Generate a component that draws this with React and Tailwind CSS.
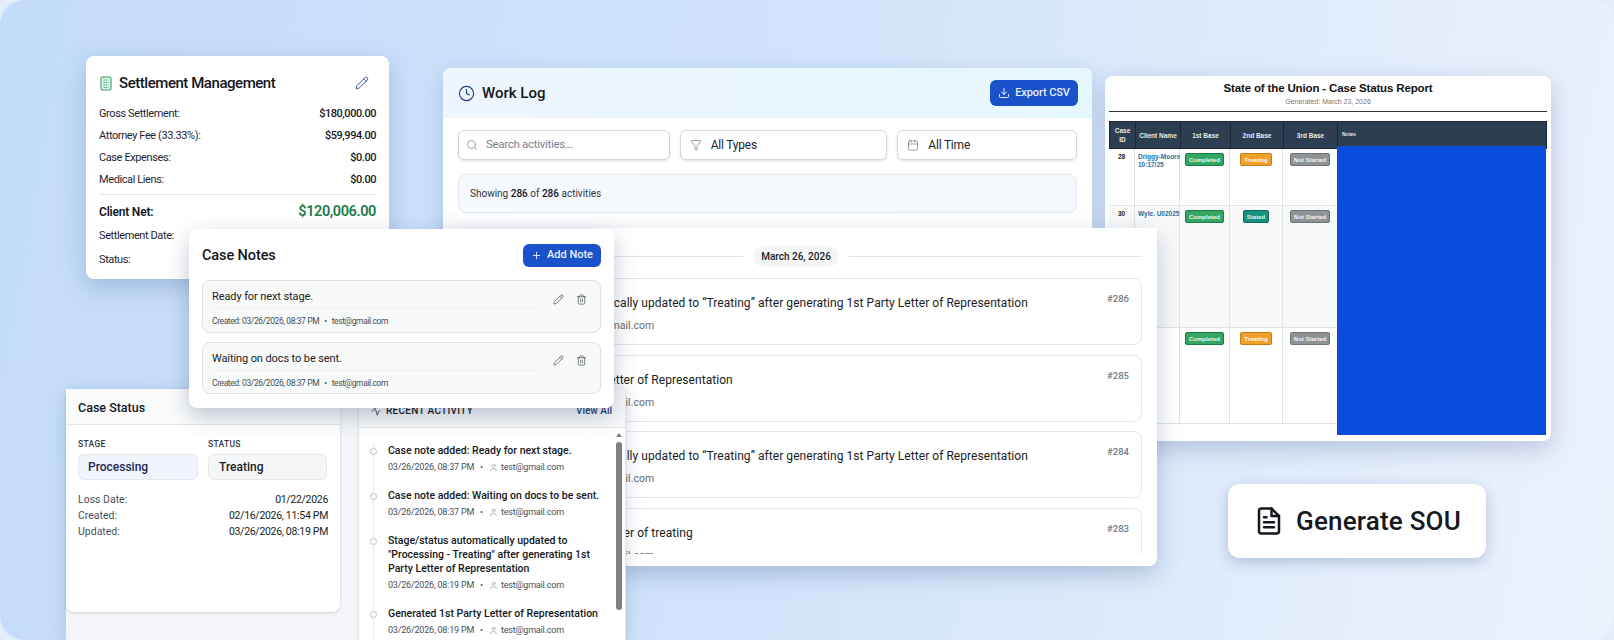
import React from "react";
import { Pencil, Trash2, Plus, Clock, Download, Search, Filter, Calendar, Activity, User } from "lucide-react";

function SettlementRow({ label, value }) {
  return (
    <div className="flex h-[22px] items-center justify-between text-[11px] leading-4 tracking-[-0.4px] text-[#1f2530]">
      <span>{label}</span>
      <span className="font-medium tracking-[-0.45px] text-[#15181e]">{value}</span>
    </div>
  );
}

function SettlementCard() {
  return (
    <div className="absolute left-[86px] top-[56px] h-[223px] w-[303px] rounded-lg bg-white px-[13px] pt-[16px] shadow-[0_8px_24px_rgba(60,90,140,0.28)]">
      <div className="flex h-[22px] items-center justify-between pr-[7px]">
        <div className="flex items-center gap-[6px]">
          <svg width="14" height="15" viewBox="0 0 14 15" fill="none" stroke="#2f9e63" strokeWidth="1.1">
            <rect x="2" y="1" width="10" height="13" rx="1.4" fill="#e6f5ec" />
            <path d="M4.5 4h5M4.5 6.5h5M4.5 9h5M4.5 11.5h5" strokeDasharray="1.4 0.9" />
          </svg>
          <h2 className="text-[15px] font-medium tracking-[-0.45px] text-[#14171c]">Settlement Management</h2>
        </div>
        <Pencil size={14} strokeWidth={1.6} className="text-[#2f4f88]" />
      </div>
      <div className="mt-[9px]">
        <SettlementRow label="Gross Settlement:" value="$180,000.00" />
        <SettlementRow label="Attorney Fee (33.33%):" value="$59,994.00" />
        <SettlementRow label="Case Expenses:" value="$0.00" />
        <SettlementRow label="Medical Liens:" value="$0.00" />
      </div>
      <div className="mt-[3px] border-t border-[#e3e5e8]" />
      <div className="mt-[5px] flex h-[24px] items-center justify-between">
        <span className="text-[12px] font-semibold tracking-[-0.2px] text-[#14171c]">Client Net:</span>
        <span className="text-[14.5px] font-semibold tracking-[-0.4px] text-[#217a4b]">$120,006.00</span>
      </div>
      <div className="mt-[1px] flex h-[22px] items-center text-[11px] tracking-[-0.4px] text-[#1f2530]">Settlement Date:</div>
      <div className="mt-[2px] flex h-[22px] items-center text-[11px] tracking-[-0.4px] text-[#1f2530]">Status:</div>
    </div>
  );
}

function WorkLogHeader() {
  return (
    <div className="absolute left-[443px] top-[68px] h-[180px] w-[649px] overflow-hidden rounded-t-lg bg-white shadow-[0_6px_20px_rgba(60,90,140,0.22)]">
      <div className="flex h-[50px] items-center justify-between bg-gradient-to-r from-[#eef5fd] to-[#e6f7fd] pl-[15px] pr-[14px]">
        <div className="flex items-center gap-[7px]">
          <Clock size={17} strokeWidth={1.6} className="text-[#1f3f78]" />
          <h2 className="text-[15px] font-medium text-[#14171c]">Work Log</h2>
        </div>
        <button className="flex h-[26px] w-[88px] items-center justify-center gap-[5px] rounded-md bg-[#1a52cb] text-[11px] font-medium tracking-[-0.1px] text-[#e8eefc]">
          <Download size={12} />
          Export CSV
        </button>
      </div>
      <div className="flex gap-[10px] px-[15px] pt-[12px]">
        <div className="flex h-[30px] w-[212px] items-center gap-[8px] rounded-md border border-[#d5d8dd] pl-[7px] text-[11.5px] tracking-[-0.3px] text-[#7c828b] shadow-sm">
          <Search size={12} strokeWidth={1.5} />
          Search activities...
        </div>
        <div className="flex h-[30px] w-[208px] items-center gap-[9px] rounded-md border border-[#d5d8dd] pl-[9px] text-[12px] tracking-[-0.2px] text-[#22262c] shadow-sm">
          <Filter size={12} strokeWidth={1.3} className="text-[#6b7078]" />
          All Types
        </div>
        <div className="flex h-[30px] w-[180px] items-center gap-[9px] rounded-md border border-[#d5d8dd] pl-[9px] text-[12px] tracking-[-0.2px] text-[#22262c] shadow-sm">
          <Calendar size={12} strokeWidth={1.3} className="text-[#6b7078]" />
          All Time
        </div>
      </div>
      <div className="mx-[15px] mt-[14px] flex h-[39px] items-center rounded-lg border border-[#e2e8f2] bg-gradient-to-r from-[#f6f9fd] to-[#f4f7fc] pl-[11px] text-[10px] text-[#30353c]">
        <span>Showing <span className="font-medium text-[#14171c]">286</span> of <span className="font-medium text-[#14171c]">286</span> activities</span>
      </div>
    </div>
  );
}

function LogRow({ text, id, h }) {
  return (
    <div className={`flex justify-between overflow-hidden rounded-lg border border-[#e3e6ea] bg-white pl-[34px] pr-[12px] pt-[12px] ${h}`}>
      <div className="pt-[2px]">
        <div className="whitespace-nowrap text-[12px] leading-5 tracking-[0.05px] text-[#1a1d22]">{text}</div>
        <div className="mt-[5px] flex items-center gap-[5px] whitespace-nowrap text-[10.5px] leading-4 text-[#666c75]">
          <span>03/26/2026</span><span>•</span>
          <User size={10} strokeWidth={1.4} />
          <span>test@gmail.com</span>
        </div>
      </div>
      <div className="text-[9.5px] font-medium leading-4 text-[#737982]">{id}</div>
    </div>
  );
}

function WorkLogBody() {
  return (
    <div className="absolute left-[443px] top-[228px] h-[338px] w-[714px] overflow-hidden rounded-b-lg bg-white px-[15px] shadow-[0_8px_24px_rgba(60,90,140,0.3)]">
      <div className="flex h-[50px] items-center pt-[7px]">
        <div className="h-px flex-1 bg-[#e2e4e8]" />
        <span className="mx-[10px] flex h-[21px] w-[86px] items-center justify-center rounded-full bg-[#f5f6f7] text-[10px] font-medium text-[#1a1d22]">March 26, 2026</span>
        <div className="h-px w-[293px] bg-[#e2e4e8]" />
      </div>
      <div className="flex flex-col gap-[9.5px]">
        <LogRow h="h-[67px]" id="#286" text="Stage/status automatically updated to “Treating” after generating 1st Party Letter of Representation" />
        <LogRow h="h-[67px]" id="#285" text="Generated 1st Party Letter of Representation" />
        <LogRow h="h-[67px]" id="#284" text="Stage/status automatically updated to “Treating” after generating 1st Party Letter of Representation" />
        <LogRow h="h-[46px] rounded-b-none border-b-0" id="#283" text="Generated 1st Party Letter of treating" />
      </div>
    </div>
  );
}

function NoteCard({ text, date }) {
  return (
    <div className="flex h-[52.5px] rounded-lg border border-[#dde0e4] bg-[#f8f9f9] pl-[9px] pr-[13px]">
      <div className="w-[328px] pt-[7px]">
        <div className="border-b border-[#eceef0] pb-[2px] text-[11px] leading-[18px] tracking-[-0.1px] text-[#1a1d22]">{text}</div>
        <div className="mt-[6px] flex items-center gap-[5px] whitespace-nowrap text-[8.5px] leading-3 tracking-[-0.4px] text-[#4a4f57]">
          <span>{date}</span><span>•</span><span>test@gmail.com</span>
        </div>
      </div>
      <div className="ml-auto flex items-center gap-[12px] pb-[14px]">
        <Pencil size={11} strokeWidth={1.5} className="text-[#444a52]" />
        <Trash2 size={11} strokeWidth={1.5} className="text-[#444a52]" />
      </div>
    </div>
  );
}

function CaseNotes() {
  return (
    <div className="absolute left-[189px] top-[229px] z-30 h-[179px] w-[425px] rounded-lg bg-white px-[13px] shadow-[0_8px_22px_rgba(50,70,110,0.3)]">
      <div className="flex h-[51px] items-center justify-between pt-[2px]">
        <h2 className="text-[14.5px] font-medium tracking-[-0.1px] text-[#14171c]">Case Notes</h2>
        <button className="flex h-[23px] w-[78px] items-center justify-center gap-[5px] rounded-md bg-[#1a52cb] text-[11px] font-medium text-[#e8eefc]">
          <Plus size={11} />
          Add Note
        </button>
      </div>
      <div className="flex flex-col gap-[9px]">
        <NoteCard text="Ready for next stage." date="Created: 03/26/2026, 08:37 PM" />
        <NoteCard text="Waiting on docs to be sent." date="Created: 03/26/2026, 08:37 PM" />
      </div>
    </div>
  );
}

function CaseStatus() {
  return (
    <div className="h-[223px] w-[274px] rounded-lg bg-white shadow-[0_1px_3px_rgba(0,0,0,0.16)]">
      <div className="flex h-[36px] items-center border-b border-[#e6e8ea] bg-[#fafbfb] pl-[12px] pt-[4px] text-[12.5px] font-medium text-[#14171c]">Case Status</div>
      <div className="flex gap-[10px] px-[12px] pt-[13px]">
        <div className="w-[120px]">
          <div className="text-[8.5px] font-medium leading-3 tracking-[0.3px] text-[#343941]">STAGE</div>
          <div className="mt-[4px] flex h-[26px] items-center rounded-md border border-[#e3e8f0] bg-[#f0f5fc] pl-[9px] text-[12px] font-medium text-[#1d2a56]">Processing</div>
        </div>
        <div className="w-[119px]">
          <div className="text-[8.5px] font-medium leading-3 tracking-[0.3px] text-[#343941]">STATUS</div>
          <div className="mt-[4px] flex h-[26px] items-center rounded-md border border-[#e6e7e9] bg-[#f5f6f7] pl-[10px] text-[12px] font-medium text-[#1a1d22]">Treating</div>
        </div>
      </div>
      <div className="mt-[12px] px-[12px] text-[10.5px] leading-4">
        <div className="flex justify-between"><span className="text-[#4a4f57]">Loss Date:</span><span className="tracking-[-0.3px] text-[#1a1d22]">01/22/2026</span></div>
        <div className="flex justify-between"><span className="text-[#4a4f57]">Created:</span><span className="tracking-[-0.3px] text-[#1a1d22]">02/16/2026, 11:54 PM</span></div>
        <div className="flex justify-between"><span className="text-[#4a4f57]">Updated:</span><span className="tracking-[-0.3px] text-[#1a1d22]">03/26/2026, 08:19 PM</span></div>
      </div>
    </div>
  );
}

function ActivityItem({ title, date, mt }) {
  return (
    <div className={`relative pl-[29px] ${mt}`}>
      <span className="absolute left-[11px] top-[4px] h-[7px] w-[7px] rounded-full border border-[#b8bcc2] bg-white" />
      <div className="text-[10.5px] font-medium leading-[14px] text-[#14171c]">{title}</div>
      <div className="mt-[3px] flex items-center gap-[6px] whitespace-nowrap text-[9px] leading-[13px] tracking-[-0.2px] text-[#4a4f57]">
        <span>{date}</span><span>•</span>
        <User size={9} strokeWidth={1.4} className="text-[#7a7f87]" />
        <span className="-ml-[3px]">test@gmail.com</span>
      </div>
    </div>
  );
}

function RecentActivity() {
  return (
    <div className="relative h-[251px] w-[266px] overflow-hidden bg-white shadow-[0_1px_3px_rgba(0,0,0,0.16)]">
      <div className="flex h-[39px] items-end justify-between border-b border-[#e6e8ea] bg-[#f8f9fa] pb-[10px] pl-[12px] pr-[13px]">
        <span className="flex items-center gap-[5px] text-[10px] font-medium leading-3 tracking-[0.3px] text-[#14171c]">
          <Activity size={10} strokeWidth={1.6} />
          RECENT ACTIVITY
        </span>
        <span className="text-[10px] font-medium leading-3 text-[#1f3f78]">View All</span>
      </div>
      <div className="absolute left-[14px] top-[55px] h-[200px] w-px bg-[#e8eaed]" />
      <div className="pt-[16px]">
        <ActivityItem title="Case note added: Ready for next stage." date="03/26/2026, 08:37 PM" />
        <ActivityItem mt="mt-[15px]" title="Case note added: Waiting on docs to be sent." date="03/26/2026, 08:37 PM" />
        <ActivityItem mt="mt-[15px]" title={<>Stage/status automatically updated to<br />"Processing - Treating" after generating 1st<br />Party Letter of Representation</>} date="03/26/2026, 08:19 PM" />
        <ActivityItem mt="mt-[15px]" title="Generated 1st Party Letter of Representation" date="03/26/2026, 08:19 PM" />
      </div>
      <div className="absolute right-[3px] top-[53px] h-[168px] w-[6px] rounded-full bg-[#7d8085]" />
      <div className="absolute right-[3px] top-[44px] h-0 w-0 border-x-[3px] border-b-[4px] border-x-transparent border-b-[#7d8085]" />
    </div>
  );
}

function CaseOverview() {
  return (
    <div className="absolute left-[66px] top-[389px] z-20 flex h-[251px] w-[560px] items-start gap-[19px] rounded-t-lg bg-[#f3f5f8] shadow-[0_4px_18px_rgba(60,90,140,0.22)]">
      <CaseStatus />
      <RecentActivity />
    </div>
  );
}

function Badge({ color, children }) {
  return (
    <span className={`flex h-[13px] items-center justify-center rounded-[2px] border px-[3px] text-[6px] font-bold leading-none text-white/90 ${color}`}>{children}</span>
  );
}

const BADGE_GREEN = "border-[#1c7a44] bg-[#33a663]";
const BADGE_ORANGE = "border-[#c77e16] bg-[#f0a12b]";
const BADGE_GRAY = "border-[#6f7375] bg-[#8f9395]";
const BADGE_TEAL = "border-[#0f6b5c] bg-[#16917d]";

function ReportRow({ id, name, a, b, c, h, alt }) {
  const cell = "flex justify-center items-start border-r border-[#dfe1e3] pt-[4px]";
  return (
    <div className={`grid grid-cols-[26px_45px_50px_53px_54px] border-b border-[#e2e4e6] ${h} ${alt ? "bg-[#f8f9f9]" : "bg-white"}`}>
      <div className="border-r border-[#dfe1e3] pt-[4px] text-center text-[6.5px] font-bold leading-[8px] text-[#222]">{id}</div>
      <div className="whitespace-nowrap border-r border-[#dfe1e3] pl-[3px] pt-[4px] text-[6.5px] font-bold leading-[8px] text-[#2c6f9c]">{name}</div>
      <div className={cell}>{a}</div>
      <div className={cell}>{b}</div>
      <div className="flex items-start justify-center pt-[4px]">{c}</div>
    </div>
  );
}

function ReportHead() {
  const cls = "flex items-center justify-center border-r border-[#1c2733] text-center text-[6.5px] font-bold leading-[9px] text-[#e6ecf0]";
  return (
    <div className="grid h-[28px] grid-cols-[26px_45px_50px_53px_54px_1fr] border border-[#1c2733] bg-[#2c3e50]">
      <div className={cls}>Case<br />ID</div>
      <div className={cls}>Client Name</div>
      <div className={cls}>1st Base</div>
      <div className={cls}>2nd Base</div>
      <div className={cls}>3rd Base</div>
      <div className="flex items-center pl-[4px] text-[5px] font-bold text-[#e6ecf0]">Notes</div>
    </div>
  );
}

function Report() {
  return (
    <div className="absolute left-[1105px] top-[76px] z-0 h-[365px] w-[446px] rounded-lg bg-white px-[4px] shadow-[0_8px_24px_rgba(60,90,140,0.28)]" style={{ fontFamily: '"Liberation Sans", Arial, sans-serif' }}>
      <h1 className="pt-[4px] text-center text-[11.5px] font-bold leading-[16px] tracking-[-0.15px] text-[#111]">State of the Union - Case Status Report</h1>
      <p className="mt-[1px] text-center text-[7px] leading-[10px] text-[#777]">Generated: March 23, 2026</p>
      <div className="mt-[4px] h-px bg-[#333]" />
      <div className="mt-[9px]">
        <ReportHead />
        <div className="relative">
          <ReportRow h="h-[57px]" id="28" name={<>Driggy-Moore<br />10:17/25</>}
            a={<Badge color={BADGE_GREEN}>Completed</Badge>} b={<Badge color={BADGE_ORANGE}>Treating</Badge>} c={<Badge color={BADGE_GRAY}>Not Started</Badge>} />
          <ReportRow h="h-[122px]" alt id="30" name="Wyle. U02025"
            a={<Badge color={BADGE_GREEN}>Completed</Badge>} b={<Badge color={BADGE_TEAL}>Stated</Badge>} c={<Badge color={BADGE_GRAY}>Not Started</Badge>} />
          <ReportRow h="h-[96px]" id="" name=""
            a={<Badge color={BADGE_GREEN}>Completed</Badge>} b={<Badge color={BADGE_ORANGE}>Treating</Badge>} c={<Badge color={BADGE_GRAY}>Not Started</Badge>} />
          <div className="absolute bottom-[-11px] left-[228px] right-px top-[-3px] bg-[#0a4cdc]" />
        </div>
      </div>
    </div>
  );
}

function GenerateSou() {
  return (
    <div className="absolute left-[1228px] top-[484px] flex h-[74px] w-[258px] items-center gap-[12px] rounded-xl bg-white pl-[26px] shadow-[0_4px_14px_rgba(60,90,140,0.3)]">
      <svg width="30" height="32" viewBox="0 0 24 24" fill="none" stroke="#15181e" strokeWidth="2" strokeLinecap="round" strokeLinejoin="round">
        <path d="M14 2H6a2 2 0 0 0-2 2v16a2 2 0 0 0 2 2h12a2 2 0 0 0 2-2V8z" />
        <path d="M14 2v6h6" />
        <path d="M8 13h8M8 17h8M8 9h2" />
      </svg>
      <span className="text-[26px] font-medium tracking-[0.2px] text-[#15181e]">Generate SOU</span>
    </div>
  );
}

export default function App() {
  return (
    <div className="h-[640px] w-[1614px] bg-[#e3eefc]" style={{ fontFamily: 'Roboto, "Noto Sans", sans-serif' }}>
      <div className="relative h-full w-full overflow-hidden rounded-[24px] bg-[linear-gradient(100deg,#c3dcfa_0%,#d2e4fb_50%,#ecf2fc_100%)]">
        <Report />
        <SettlementCard />
        <WorkLogHeader />
        <WorkLogBody />
        <GenerateSou />
        <CaseOverview />
        <CaseNotes />
      </div>
    </div>
  );
}
